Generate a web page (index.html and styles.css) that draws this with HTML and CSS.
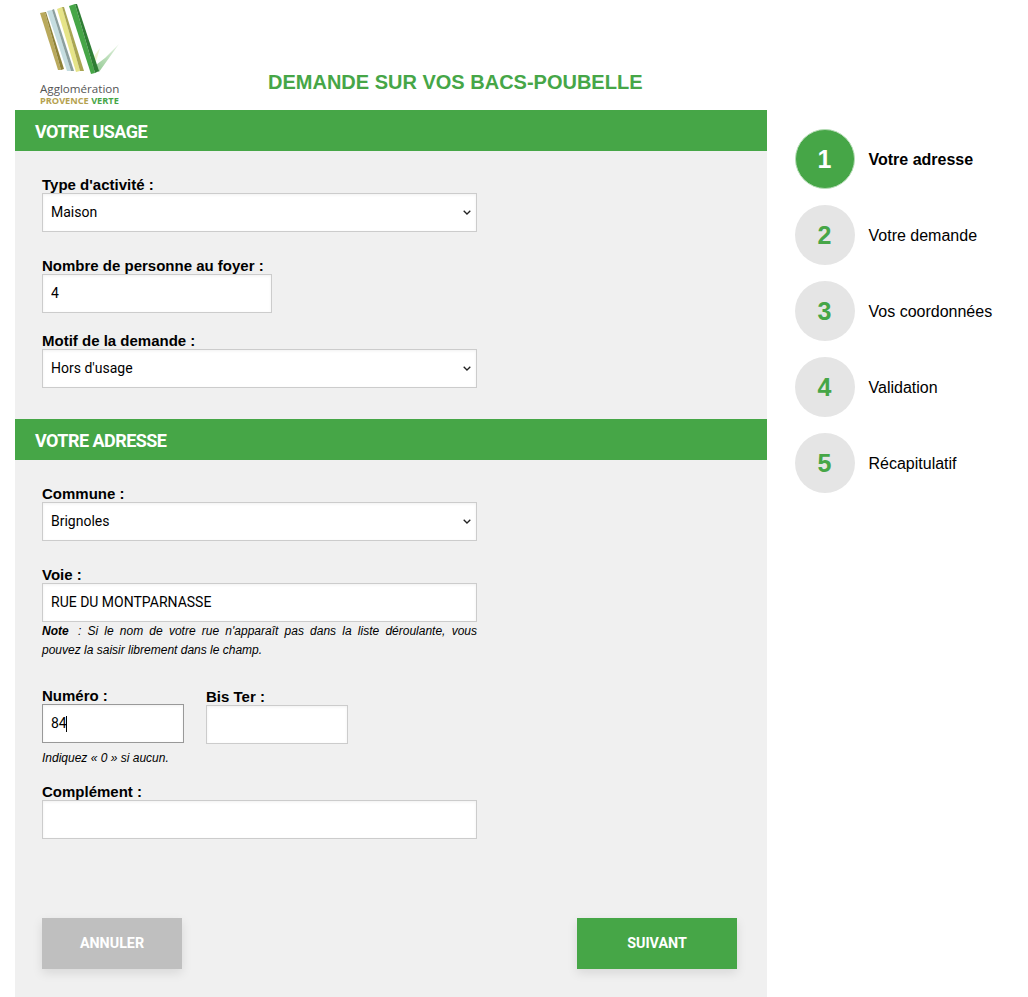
FILE: index.html
```html
<!DOCTYPE html>
<html lang="fr">
<head>
  <meta charset="UTF-8">
  <title>Demande sur vos bacs-poubelle</title>
  <link rel="stylesheet" href="styles.css">
</head>
<body>

  <div class="page">
    <div class="main">

      <div class="top">
        <svg class="logo" viewBox="20 0 110 110" width="110" height="110">
          <defs>
            <linearGradient id="tick" x1="0" y1="1" x2="1" y2="0">
              <stop offset="0" stop-color="#8cc68c"/>
              <stop offset="1" stop-color="#e6f3e2"/>
            </linearGradient>
          </defs>
          <polygon points="92,68 99,72 119,44 105,58" fill="url(#tick)"/>
          <polygon points="90,62 94,68 100,48" fill="#f0f3d0"/>
          <polygon points="40,13 45,12 61,70 58,70" fill="#b9a95c"/>
          <polygon points="45,12 46,12 64,69 61,70" fill="#8f8238"/>
          <polygon points="47,11 52,10 71,71 67,71" fill="#c5dde0"/>
          <polygon points="52,10 54,9 74,71 71,71" fill="#8b9f9e"/>
          <polygon points="57,9 62,7 80,71 76,72" fill="#e6e488"/>
          <polygon points="62,7 64,7 84,71 80,71" fill="#a9a653"/>
          <polygon points="69,6 75,4 95,73 91,74" fill="#46a647"/>
          <polygon points="75,4 77,4 99,71 95,73" fill="#2f7d34"/>
          <text class="logo-name" x="40" y="93">Agglomération</text>
          <text class="logo-sub" x="40" y="104">PROVENCE <tspan class="logo-verte">VERTE</tspan></text>
        </svg>
        <h1 class="title">DEMANDE SUR VOS BACS-POUBELLE</h1>
      </div>

      <form class="panel">
        <h2 class="head">VOTRE USAGE</h2>
        <div class="body usage">
          <div class="field">
            <label for="activite">Type d'activité :</label>
            <select id="activite" class="box wide"><option>Maison</option></select>
          </div>
          <div class="field close">
            <label for="foyer">Nombre de personne au foyer :</label>
            <input id="foyer" class="box medium" type="text" value="4">
          </div>
          <div class="field">
            <label for="motif">Motif de la demande :</label>
            <select id="motif" class="box wide"><option>Hors d'usage</option></select>
          </div>
        </div>

        <h2 class="head">VOTRE ADRESSE</h2>
        <div class="body">
          <div class="field">
            <label for="commune">Commune :</label>
            <select id="commune" class="box wide"><option>Brignoles</option></select>
          </div>
          <div class="field">
            <label for="voie">Voie :</label>
            <input id="voie" class="box wide" type="text" value="RUE DU MONTPARNASSE">
            <p class="note"><b>Note</b> <span>: Si le nom de votre rue n'apparaît pas dans la liste déroulante, vous</span> <span>pouvez la saisir librement dans le champ.</span></p>
          </div>
          <div class="pair">
            <div class="num-field">
              <label for="numero">Numéro :</label>
              <input id="numero" class="box small" type="text" value="84" autofocus>
              <span class="caret"></span>
            </div>
            <div class="bis">
              <label for="bis">Bis Ter :</label>
              <input id="bis" class="box small" type="text">
            </div>
          </div>
          <p class="hint">Indiquez « 0 » si aucun.</p>
          <div class="field last">
            <label for="complement">Complément :</label>
            <input id="complement" class="box wide" type="text">
          </div>
          <div class="actions">
            <button type="button" class="btn cancel">ANNULER</button>
            <button type="button" class="btn next">SUIVANT</button>
          </div>
        </div>
      </form>
    </div>

    <ol class="steps">
      <li class="step active"><span class="num">1</span><span class="step-name">Votre adresse</span></li>
      <li class="step"><span class="num">2</span><span class="step-name">Votre demande</span></li>
      <li class="step"><span class="num">3</span><span class="step-name">Vos coordonnées</span></li>
      <li class="step"><span class="num">4</span><span class="step-name">Validation</span></li>
      <li class="step"><span class="num">5</span><span class="step-name">Récapitulatif</span></li>
    </ol>
  </div>

</body>
</html>
```

FILE: styles.css
```css
body { margin: 0; background: #fff; color: #000; font-family: "Liberation Sans", Arial, sans-serif; }
.page { display: flex; padding-left: 15px; }
.main { width: 752px; }

.top { display: flex; height: 110px; }
.logo { margin-left: 5px; flex: none; }
.logo-name { font-family: "Open Sans", sans-serif; font-size: 11.6px; fill: #555; }
.logo-sub { font-family: "Open Sans", sans-serif; font-size: 9.2px; font-weight: 700; fill: #b5a24f; }
.logo-verte { fill: #46a647; }
.title { margin: 70px 0 0 138px; font-size: 20px; line-height: 24px; font-weight: bold; color: #46a647; white-space: nowrap; }

.panel { background: #f0f0f0; height: 887px; }
.head { margin: 0; height: 41px; padding-left: 20px; background: #46a647; color: #fff; font-family: Roboto, sans-serif; font-size: 18px; font-weight: 700; line-height: 44px; letter-spacing: -.55px; }
.body { padding: 26px 30px 0 27px; }
.usage { height: 268px; box-sizing: border-box; }

.field { margin-bottom: 26px; }
.field.close { margin-bottom: 20px; }
.field.last { margin-bottom: 0; }
label { display: block; font-size: 15px; line-height: 16px; font-weight: bold; }

.box { display: block; height: 39px; box-sizing: border-box; border: 1px solid #ccc; background-color: #fff; padding: 0 8px 2px; font-family: Roboto, sans-serif; font-size: 14px; color: #000; border-radius: 0; box-shadow: inset 0 1px 3px rgba(0, 0, 0, .06); outline: none; }
.box:focus { border-color: #999; caret-color: transparent; }
select.box { appearance: none; background-image: url("data:image/svg+xml,%3Csvg xmlns='http://www.w3.org/2000/svg' width='8' height='5'%3E%3Cpath d='M.7.7 4 4l3.3-3.3' fill='none' stroke='%23222' stroke-width='1.3'/%3E%3C/svg%3E"); background-repeat: no-repeat; background-position: right 5px center; }
.wide { width: 435px; }
.medium { width: 230px; }
.small { width: 142px; }

.note { width: 435px; margin: 0 0 28px; font-size: 12px; line-height: 19px; font-style: italic; text-align: justify; }
.note b { padding-right: 3px; }
.pair { display: flex; gap: 22px; }
.bis { padding-top: 1px; }
.num-field { position: relative; }
.caret { position: absolute; left: 24px; top: 28px; width: 1px; height: 16px; background: #000; }
.hint { margin: 6px 0 18px; font-size: 12px; line-height: 16px; font-style: italic; }

.actions { display: flex; justify-content: space-between; margin-top: 79px; }
.btn { height: 51px; border: 0; padding: 0 0 2px; color: #fff; font-family: Roboto, sans-serif; font-size: 14.3px; font-weight: 700; box-shadow: 0 4px 10px rgba(0, 0, 0, .1); }
.cancel { width: 140px; background: #bfbfbf; }
.next { width: 160px; background: #46a647; }

.steps { list-style: none; margin: 0 0 0 28px; padding: 129px 0 0; }
.step { display: flex; align-items: center; gap: 13.5px; margin-bottom: 16px; font-size: 16px; white-space: nowrap; }
.step-name { padding-top: 2px; }
.num { display: flex; align-items: center; justify-content: center; width: 60px; height: 60px; padding-right: 1px; box-sizing: border-box; border-radius: 50%; background: #e5e5e5; color: #46a647; font-size: 25px; font-weight: bold; }
.active { font-weight: bold; }
.active .num { background: #46a647; color: #fff; border: 1px solid #b5dcb5; }
```
